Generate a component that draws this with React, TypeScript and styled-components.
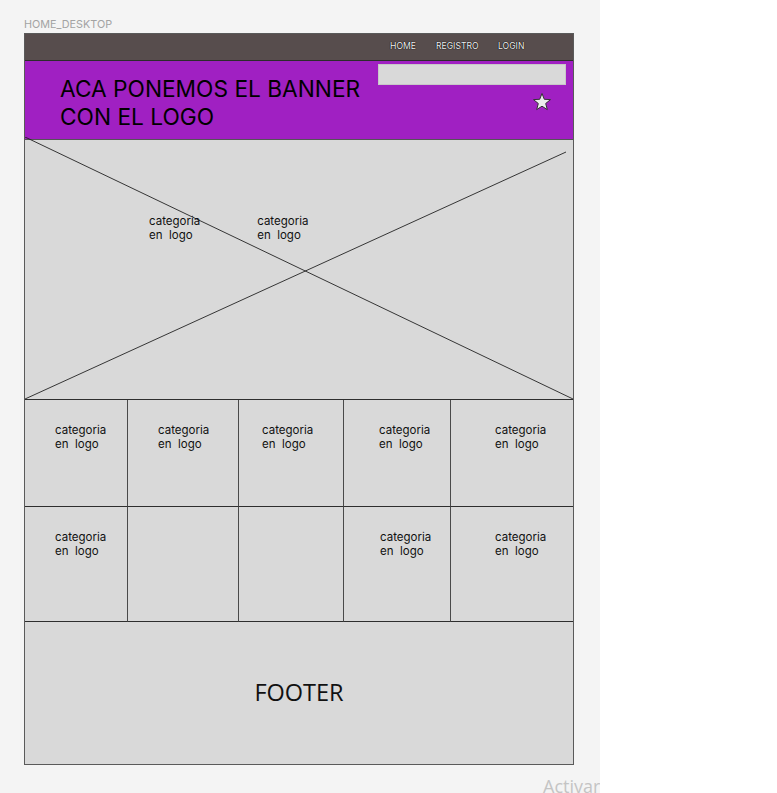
import React from "react";
import styled, { createGlobalStyle } from "styled-components";

const GlobalStyle = createGlobalStyle`
  html, body {
    margin: 0;
    padding: 0;
    background: #ffffff;
  }
  body {
    font-family: Inter, "Liberation Sans", sans-serif;
  }
`;

const Canvas = styled.div`
  position: relative;
  width: 600px;
  height: 793px;
  background: #f4f4f4;
  overflow: hidden;
  padding: 18px 0 0 24px;
  box-sizing: border-box;
`;

const FrameLabel = styled.div`
  font-size: 10.8px;
  line-height: 14px;
  color: #a3a3a3;
  height: 15px;
`;

const Frame = styled.div`
  width: 550px;
  border: 1px solid #5a5a5a;
  box-sizing: border-box;
  display: flex;
  flex-direction: column;
`;

const NavBar = styled.nav`
  height: 26px;
  background: #574d4d;
  border-bottom: 1px solid #2c2c2c;
  display: flex;
  justify-content: flex-end;
  align-items: center;
  padding-right: 49px;
`;

const NavLink = styled.span<{ $w: number }>`
  width: ${(p) => p.$w}px;
  font-size: 8.6px;
  color: #f2f2f2;
  text-shadow: 0 0 1px #000, 0 0 1px #000;
  padding-bottom: 2px;
`;

const Banner = styled.header`
  height: 78px;
  background: #a020c2;
  border-bottom: 1px solid #555;
  display: flex;
  justify-content: space-between;
`;

const BannerTitle = styled.h1`
  margin: 14px 0 0 35px;
  font-size: 22.7px;
  line-height: 28px;
  font-weight: 400;
  color: #000;
`;

const BannerSide = styled.div`
  display: flex;
  flex-direction: column;
  align-items: flex-end;
  padding: 3px 7px 0 0;
`;

const Search = styled.div`
  width: 188px;
  height: 21px;
  background: #d9d9d9;
  border: 1px solid #c8c8c8;
  box-sizing: border-box;
`;

const StarWrap = styled.div`
  margin: 7px 14px 0 0;
  width: 20px;
  height: 20px;
`;

const Hero = styled.section`
  position: relative;
  height: 260px;
  background: #d9d9d9;
  border-bottom: 1px solid #2e2e2e;
  display: flex;
  gap: 57px;
  padding: 74px 0 0 124px;
  box-sizing: border-box;
`;

const Cross = styled.svg`
  position: absolute;
  left: 0;
  top: -3px;
  width: 548px;
  height: 263px;
  pointer-events: none;
`;

const CatText = styled.div`
  position: relative;
  font-size: 11.5px;
  line-height: 14px;
  color: #111;
`;

const Grid = styled.section`
  display: grid;
  grid-template-columns: 103px 111px 105px 107px 1fr;
  grid-template-rows: 107px 115px;
`;

const Cell = styled.div<{ $pad: number; $last?: boolean }>`
  background: #d9d9d9;
  border-right: ${(p) => (p.$last ? "none" : "1px solid #4a4a4a")};
  border-bottom: 1px solid #2e2e2e;
  padding: 23px 0 0 ${(p) => p.$pad}px;
  box-sizing: border-box;
`;

const Footer = styled.footer`
  height: 142px;
  background: #d9d9d9;
  display: flex;
  align-items: center;
  justify-content: center;
  font-family: "Open Sans", "Noto Sans", sans-serif;
  font-size: 23.5px;
  color: #111;
  padding-bottom: 2px;
  box-sizing: border-box;
`;

const Watermark = styled.div`
  position: absolute;
  left: 543px;
  top: 774px;
  font-family: "Open Sans", "Noto Sans", sans-serif;
  font-size: 18px;
  color: #c4c4c4;
  white-space: nowrap;
`;

const Cat = () => (
  <CatText>
    categoria
    <br />
    en&nbsp; logo
  </CatText>
);

const row1 = [30, 30, 23, 35, 44];
const row2: (number | null)[] = [30, null, null, 36, 44];

export default function App() {
  return (
    <>
      <GlobalStyle />
      <Canvas>
        <FrameLabel>HOME_DESKTOP</FrameLabel>
        <Frame>
          <NavBar>
            <NavLink $w={46}>HOME</NavLink>
            <NavLink $w={62}>REGISTRO</NavLink>
            <NavLink $w={26}>LOGIN</NavLink>
          </NavBar>
          <Banner>
            <BannerTitle>
              ACA PONEMOS EL BANNER
              <br />
              CON EL LOGO
            </BannerTitle>
            <BannerSide>
              <Search />
              <StarWrap>
                <svg width="20" height="20" viewBox="0 0 20 20">
                  <path
                    d="M10 1.5 L12.3 7.3 L18.5 7.6 L13.7 11.5 L15.3 17.6 L10 14.2 L4.7 17.6 L6.3 11.5 L1.5 7.6 L7.7 7.3 Z"
                    fill="#ececec"
                    stroke="#333"
                    strokeWidth="1"
                  />
                </svg>
              </StarWrap>
            </BannerSide>
          </Banner>
          <Hero>
            <Cross viewBox="0 0 548 263">
              <line x1="0" y1="0" x2="548" y2="262" stroke="#222" strokeWidth="0.9" />
              <line x1="0" y1="262" x2="541" y2="15" stroke="#222" strokeWidth="0.9" />
            </Cross>
            <Cat />
            <Cat />
          </Hero>
          <Grid>
            {row1.map((p, i) => (
              <Cell key={"a" + i} $pad={p} $last={i === 4}>
                <Cat />
              </Cell>
            ))}
            {row2.map((p, i) => (
              <Cell key={"b" + i} $pad={p ?? 0} $last={i === 4}>
                {p !== null && <Cat />}
              </Cell>
            ))}
          </Grid>
          <Footer>FOOTER</Footer>
        </Frame>
        <Watermark>Activar Windows</Watermark>
      </Canvas>
    </>
  );
}
